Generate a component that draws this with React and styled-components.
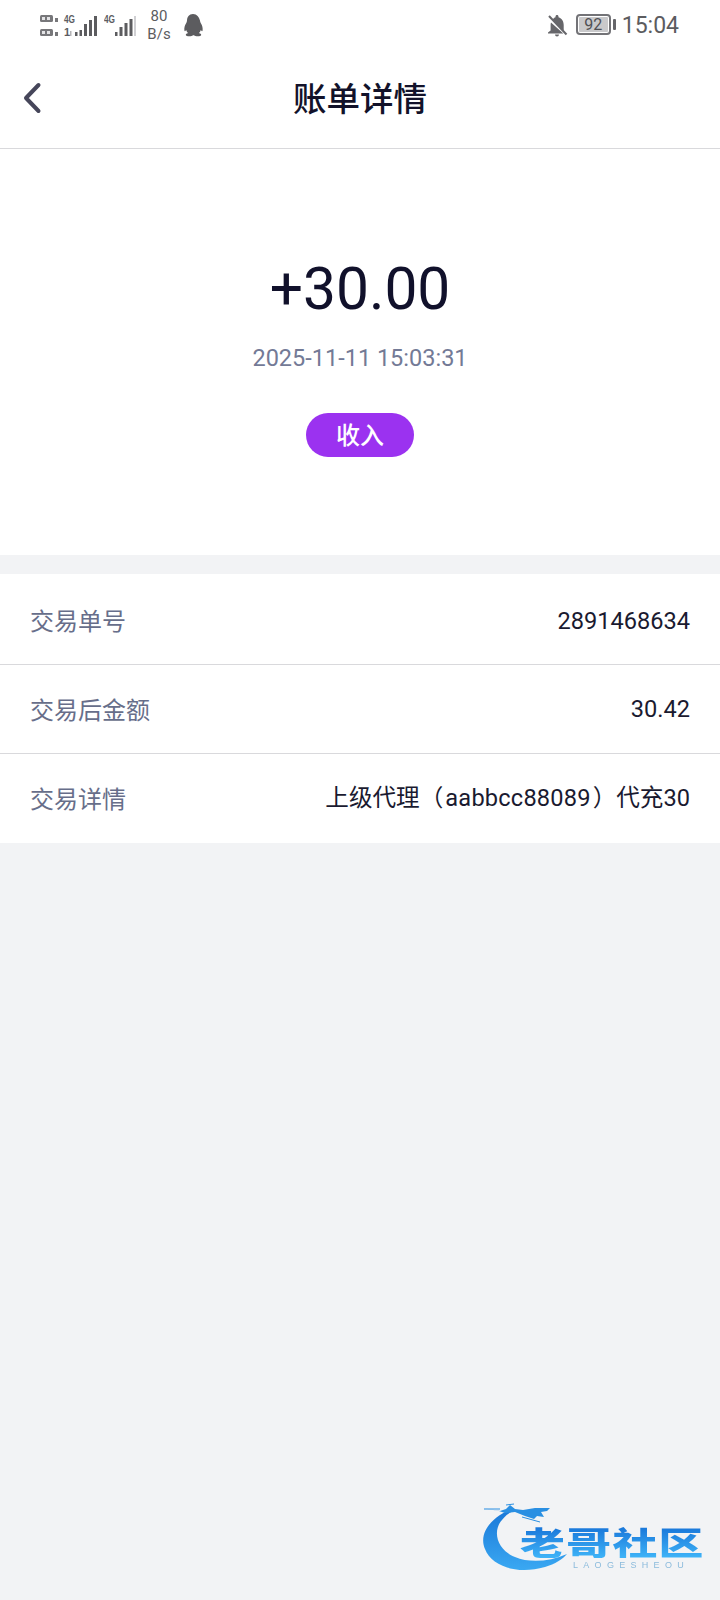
import React from "react";
import styled, { createGlobalStyle } from "styled-components";

const GlobalStyle = createGlobalStyle`
  html, body { margin: 0; padding: 0; background: #f2f3f5; }
  body { font-family: Roboto, "Noto Sans CJK SC", sans-serif; }
`;

const Page = styled.div`
  width: 720px;
  height: 1600px;
  background: #f2f3f5;
  position: relative;
  overflow: hidden;
`;

const StatusBar = styled.div`
  height: 50px;
  background: white;
  display: flex;
  align-items: center;
  justify-content: space-between;
  padding: 0 41px 0 40px;
  box-sizing: border-box;
  color: #5c5c5f;
`;

const StatusGroup = styled.div`
  display: flex;
  align-items: center;
`;

const SignalGap = styled.div`
  width: 6px;
`;

const NetSpeed = styled.div`
  width: 24px;
  margin: 0 11px 0 11px;
  font-size: 15px;
  line-height: 18px;
  text-align: center;
  white-space: nowrap;
  display: flex;
  flex-direction: column;
  align-items: center;
`;

const Clock = styled.span`
  font-size: 23px;
  margin-left: 6px;
  padding-top: 1px;
  line-height: 48px;
`;

const Battery = styled.div`
  width: 35px;
  height: 21px;
  box-sizing: border-box;
  border: 2px solid #737377;
  border-radius: 4px;
  margin: -1px 0 0 8px;
  padding: 1px;
  display: flex;
`;

const BatteryFill = styled.div`
  flex: 1;
  background: #c9c9cb;
  border-radius: 1px;
  font-size: 16px;
  line-height: 15px;
  text-align: center;
  color: #505054;
`;

const BatteryCap = styled.div`
  width: 3px;
  height: 11px;
  background: #66666a;
  border-radius: 1px;
  margin: -1px 0 0 2px;
`;

const NavBar = styled.div`
  height: 99px;
  background: white;
  border-bottom: 1px solid #d9d9dc;
  box-sizing: border-box;
  padding-top: 2px;
  display: flex;
  align-items: center;
  justify-content: center;
  position: relative;
`;

const BackButton = styled.div`
  position: absolute;
  left: 22px;
  top: 31px;
  width: 20px;
  height: 34px;
  display: flex;
`;

const Title = styled.h1`
  margin: 0;
  font-size: 33.500px;
  font-weight: 500;
  color: #12122a;
  line-height: 1;
`;

const Hero = styled.div`
  height: 406px;
  background: white;
  display: flex;
  flex-direction: column;
  align-items: center;
  padding-top: 105px;
  box-sizing: border-box;
`;

const Amount = styled.div`
  font-size: 58.700px;
  line-height: 70px;
  color: #11112b;
`;

const DateText = styled.div`
  font-size: 23.500px;
  line-height: 28px;
  color: #737a96;
  margin-top: 20px;
`;

const TypeTag = styled.div`
  width: 108px;
  height: 44px;
  border-radius: 22px;
  background: #9b32f0;
  color: white;
  font-size: 24px;
  font-weight: 500;
  line-height: 46px;
  text-align: center;
  margin-top: 41px;
`;

const List = styled.div`
  margin-top: 19px;
  padding: 1px 0;
  background: white;
`;

const Row = styled.div`
  height: 89px;
  box-sizing: border-box;
  display: flex;
  align-items: center;
  justify-content: space-between;
  padding: 0 30px;
  & + & {
    border-top: 1px solid #d9d9dc;
    padding-bottom: 2px;
  }
`;

const RowLabel = styled.span`
  font-size: 24px;
  color: #676e8a;
`;

const RowValue = styled.span`
  font-size: 23.600px;
  padding: ${(p) => (p.$numeric ? "2px 0 0" : "0 0 2px")};
  color: #1a1a30;
`;

const Account = styled.span`
  letter-spacing: 0.2px;
  padding: 0 2px;
`;

const Watermark = styled.div`
  position: absolute;
  left: 482px;
  top: 1503px;
  width: 226px;
  height: 72px;
  filter: blur(0.5px);
`;

const WatermarkSwoosh = styled.svg`
  position: absolute;
  left: 0;
  top: 0;
`;

const WatermarkName = styled.div`
  position: absolute;
  left: 38px;
  top: 21px;
  font-size: 32px;
  line-height: 34px;
  font-weight: 900;
  letter-spacing: 1px;
  white-space: nowrap;
  font-family: "Noto Sans CJK SC", sans-serif;
  background: linear-gradient(180deg, #1570d6, #3fb4f8);
  -webkit-background-clip: text;
  background-clip: text;
  color: transparent;
  transform: scaleX(1.4);
  transform-origin: left center;
`;

const WatermarkSub = styled.div`
  position: absolute;
  left: 91px;
  top: 57px;
  font-size: 9px;
  line-height: 10px;
  letter-spacing: 5.300px;
  color: #8cbbdc;
  white-space: nowrap;
  font-family: "Liberation Sans", sans-serif;
`;

const SmallText = styled.text`
  font-family: "Liberation Sans", sans-serif;
  font-size: 11px;
  font-weight: 700;
  fill: #5c5c5f;
`;

const SimBadge = ({ y }) => (
  <g>
    <rect x="0" y={y} width="13" height="7" rx="1.500" fill="#77777a" />
    <rect x="2" y={y + 2} width="3" height="3" fill="#e4e4e6" />
    <rect x="7" y={y + 2} width="3" height="3" fill="#e4e4e6" />
    <rect x="15" y={y + 3} width="3" height="4" fill="#77777a" />
  </g>
);

const SimSignal = () => (
  <svg width="58" height="24" viewBox="0 0 58 24" fill="#5c5c5f">
    <SimBadge y={2} />
    <SimBadge y={16} />
    <SmallText x="24" y="10" textLength="11" lengthAdjust="spacingAndGlyphs">4G</SmallText>
    <SmallText x="24" y="23">1</SmallText>
    <rect x="30" y="18" width="1.500" height="5" fill="#b5b5b8" />
    <rect x="35" y="19" width="2.500" height="4" />
    <rect x="39.500" y="17" width="2.500" height="6" />
    <rect x="44" y="11" width="3" height="12" />
    <rect x="49" y="7" width="3" height="16" />
    <rect x="54" y="3" width="3" height="20" />
  </svg>
);

const SecondSignal = () => (
  <svg width="32" height="24" viewBox="0 0 32 24" fill="#5c5c5f">
    <SmallText x="0" y="10" textLength="11" lengthAdjust="spacingAndGlyphs">4G</SmallText>
    <rect x="11" y="19" width="2.500" height="4" />
    <rect x="15.500" y="14" width="3" height="9" />
    <rect x="20.500" y="10" width="3" height="13" />
    <rect x="25.500" y="6" width="3" height="17" />
    <rect x="30" y="3" width="2" height="20" fill="#d0d0d3" />
  </svg>
);

const QQIcon = () => (
  <svg width="22" height="24" viewBox="0 0 22 24" fill="#5c5c5f">
    <path d="M11 1C7 1 5 4 5 7.500c0 1-.4 1.800-1 3C2.800 12.500 2 15 2.400 17.500c.3 1 1 .8 1.800-.4.300 1.200 1 2.200 1.800 3-1.400.5-2.200 1-2.200 1.800 0 .9 1.700 1.300 3.700 1.300 1.500 0 2.700-.4 3.500-1h.999c.8.600 2 1 3.500 1 2 0 3.700-.4 3.700-1.300 0-.8-.8-1.300-2.200-1.800.8-.8 1.500-1.800 1.800-3 .8 1.200 1.500 1.400 1.800.4.400-2.500-.4-5-1.600-7-.6-1.200-1-2-1-3C17 4 15 1 11 1z" />
  </svg>
);

const BellOffIcon = () => (
  <svg width="22" height="24" viewBox="0 0 22 24" fill="#66666a">
    <path d="M11 2c-.9 0-1.500.6-1.500 1.500v.7C8.300 4.600 7.300 5.400 6.700 6.500l11 11.300V12c0-3.600-1.700-6.800-5.200-7.800v-.7C12.500 2.600 11.900 2 11 2zM5 9.500c-.3.800-.4 1.600-.4 2.500v5.500L2 19.500v1h15.300z" />
    <path d="M9 21.500h4a2 2 0 0 1-4 0z" />
    <path d="M3 3L20.500 21.500" stroke="#66666a" strokeWidth="2" />
  </svg>
);

export default function App() {
  return (
    <Page>
      <GlobalStyle />
      <StatusBar>
        <StatusGroup>
          <SimSignal />
          <SignalGap />
          <SecondSignal />
          <NetSpeed>
            <span>80</span>
            <span>B/s</span>
          </NetSpeed>
          <QQIcon />
        </StatusGroup>
        <StatusGroup>
          <BellOffIcon />
          <Battery>
            <BatteryFill>92</BatteryFill>
          </Battery>
          <BatteryCap />
          <Clock>15:04</Clock>
        </StatusGroup>
      </StatusBar>

      <NavBar>
        <BackButton>
          <svg width="20" height="34" viewBox="0 0 20 34" fill="none">
            <path d="M16.500 4L4 17l12.500 13" stroke="#46465a" strokeWidth="4" strokeLinecap="round" strokeLinejoin="round" />
          </svg>
        </BackButton>
        <Title>账单详情</Title>
      </NavBar>

      <Hero>
        <Amount>+30.00</Amount>
        <DateText>2025-11-11 15:03:31</DateText>
        <TypeTag>收入</TypeTag>
      </Hero>

      <List>
        <Row>
          <RowLabel>交易单号</RowLabel>
          <RowValue $numeric>2891468634</RowValue>
        </Row>
        <Row>
          <RowLabel>交易后金额</RowLabel>
          <RowValue $numeric>30.42</RowValue>
        </Row>
        <Row>
          <RowLabel>交易详情</RowLabel>
          <RowValue>上级代理（<Account>aabbcc88089</Account>）代充30</RowValue>
        </Row>
      </List>

      <Watermark>
        <WatermarkSwoosh width="90" height="72" viewBox="0 0 90 72">
          <defs>
            <linearGradient id="swoosh" x1="0" y1="0" x2="0" y2="1">
              <stop offset="0" stopColor="#1a78d8" />
              <stop offset="1" stopColor="#3aa8f2" />
            </linearGradient>
          </defs>
          <path d="M28 7C10 14-4 30 3 46c6 17 32 26 60 18 10-3 18-8 22-13-18 8-38 9-52 3C15 47 10 28 20 17c3-4 7-7 11-9z" fill="url(#swoosh)" />
          <path d="M0 5l18 3 6-2 4-4 5 4 8 1 12-2 15 0-3 3-6 1 3 5-7-1-3 3-9-3-10-4-10 1-6-2z" fill="#2a8fe2" />
          <path d="M2 6l16 0M40 14l18 5M24 2l8-1" stroke="#2a8fe2" strokeWidth="1" />
        </WatermarkSwoosh>
        <WatermarkName>老哥社区</WatermarkName>
        <WatermarkSub>LAOGESHEOU</WatermarkSub>
      </Watermark>
    </Page>
  );
}
